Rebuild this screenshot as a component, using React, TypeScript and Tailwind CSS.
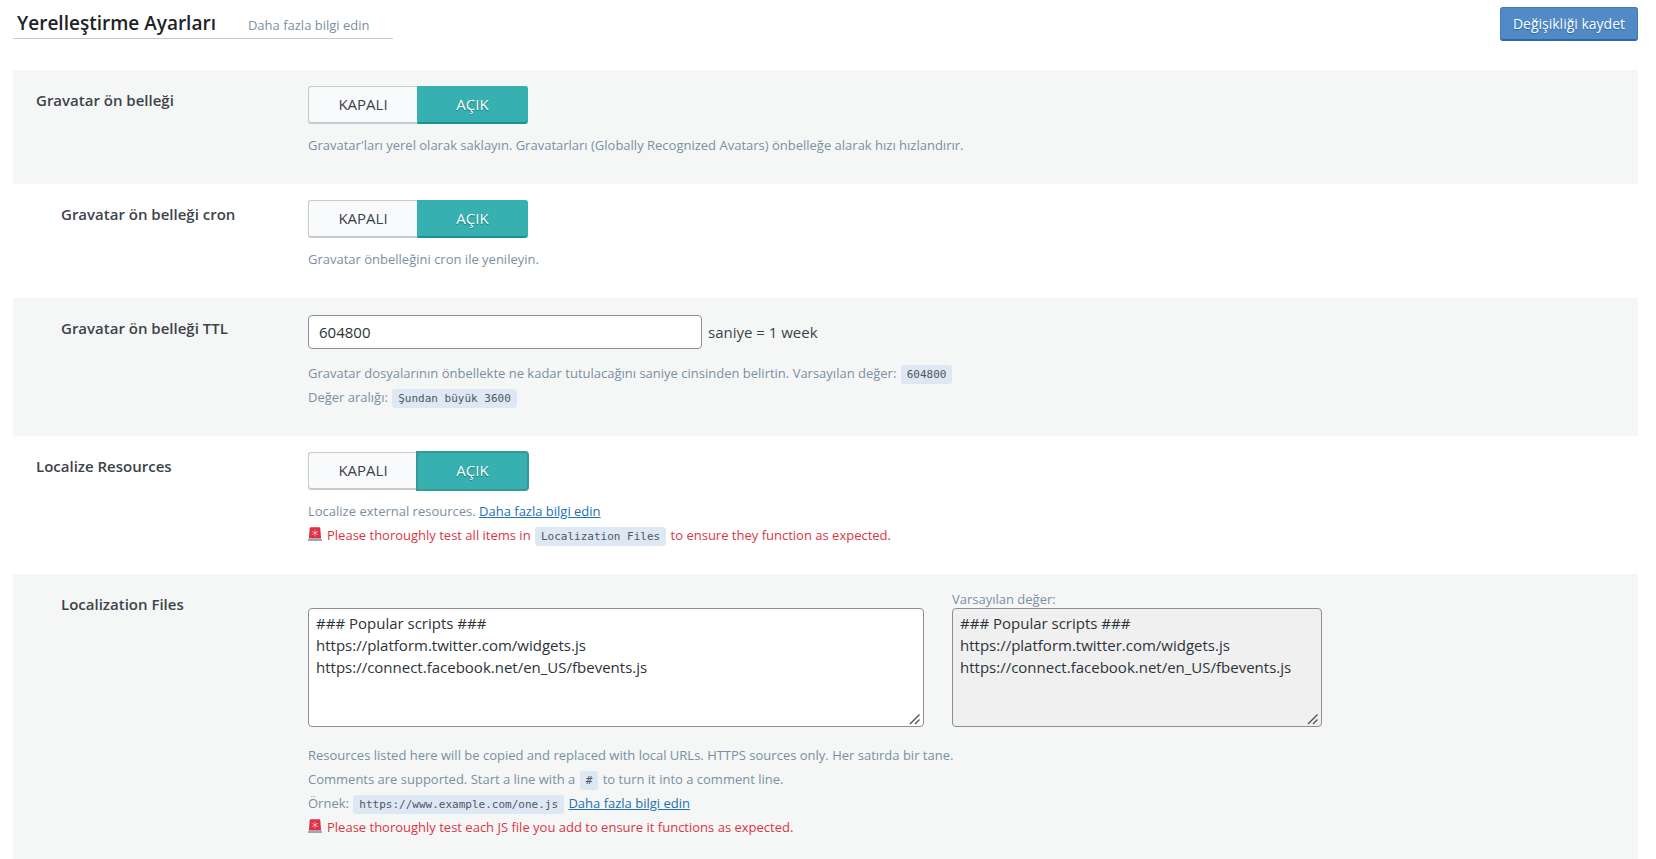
import { useState, type ReactNode } from "react";
import clsx from "clsx";

const scripts = `### Popular scripts ###
https://platform.twitter.com/widgets.js
https://connect.facebook.net/en_US/fbevents.js`;

function Row({
  title,
  htmlFor,
  sub,
  shaded,
  last,
  children,
}: {
  title: string;
  htmlFor?: string;
  sub?: boolean;
  shaded?: boolean;
  last?: boolean;
  children: ReactNode;
}) {
  const cls = clsx(
    "w-[272px] shrink-0 pt-[2px] text-[15px] leading-6 font-semibold text-[#3c434a]",
    sub && "pl-[25px]",
  );
  return (
    <div
      className={clsx(
        "flex pt-4 pl-[23px]",
        shaded && "bg-[#f5f7f7]",
        last ? "pb-5" : "pb-[27px]",
      )}
    >
      {htmlFor ? (
        <label htmlFor={htmlFor} className={cls}>
          {title}
        </label>
      ) : (
        <div className={cls}>{title}</div>
      )}
      <div className="min-w-0 flex-1">{children}</div>
    </div>
  );
}

function Toggle({ name, focused }: { name: string; focused?: boolean }) {
  const [on, setOn] = useState(true);
  const base =
    "flex h-[38px] cursor-pointer items-center justify-center border pb-[2px] text-[15px]";
  return (
    <div role="radiogroup" aria-label={name} className="flex">
      <label
        className={clsx(
          base,
          "w-[109px] rounded-l-[3px]",
          on
            ? "border-[#c8cbcd] border-r-0 bg-[#f9fafc] text-[#3c434a] shadow-[inset_0_-1px_0_#c8cbcd]"
            : "border-[#36b0b0] bg-[#36b0b0] text-white",
        )}
      >
        <input
          type="radio"
          name={name}
          checked={!on}
          onChange={() => setOn(false)}
          className="sr-only"
        />
        KAPALI
      </label>
      <label
        className={clsx(
          base,
          "w-[111px] rounded-r-[3px]",
          on
            ? "border-[#36b0b0] bg-[#36b0b0] text-white text-shadow-[0_1px_1px_#1b7272]"
            : "border-[#c8cbcd] bg-[#f9fafc] text-[#3c434a]",
          on && !focused && "border-b-[#1b9292] shadow-[inset_0_-1px_0_#1b9292]",
          focused && "outline-2 -outline-offset-1 outline-[#369a94]",
        )}
      >
        <input
          type="radio"
          name={name}
          checked={on}
          onChange={() => setOn(true)}
          className="sr-only"
        />
        AÇIK
      </label>
    </div>
  );
}

function Code({ children }: { children: ReactNode }) {
  return (
    <code className="mx-px inline-block rounded-[3px] bg-[#dde8f4] px-[6px] align-middle font-['DejaVu_Sans_Mono',monospace] text-[11px] leading-[19px] text-[#50575e]">
      {children}
    </code>
  );
}

function MoreLink() {
  return (
    <a href="#docs" className="text-[#2271b1] underline">
      Daha fazla bilgi edin
    </a>
  );
}

function Siren() {
  return (
    <svg viewBox="0 0 14 14" className="mr-[5px] inline-block size-[14px] align-[-1px]" aria-hidden="true">
      <path d="M.9 11.4 1.7 1.5Q1.9.3 3 .3h8q1.1 0 1.3 1.2l.8 9.9z" fill="#dd2e44" />
      <path
        d="M7 2.8v6.4M4 4.3l6 3.4M10 4.3 4 7.7"
        stroke="#f4a0ac"
        strokeWidth=".9"
        strokeLinecap="round"
      />
      <circle cx="7" cy="6" r="1" fill="#f9c8cf" />
      <path d="M0 11.8h14V14H0z" fill="#99aab5" />
    </svg>
  );
}

function Desc({ children, className }: { children: ReactNode; className?: string }) {
  return (
    <div className={clsx("text-[13px] leading-6 text-[#7b8f9f]", className ?? "mt-[9px]")}>
      {children}
    </div>
  );
}

function ScriptArea({ id, readOnly }: { id: string; readOnly?: boolean }) {
  return (
    <div className="relative">
      <textarea
        id={id}
        readOnly={readOnly}
        defaultValue={scripts}
        className={clsx(
          "block h-[119px] w-full resize-y rounded-[4px] border border-[#8c8f94] px-[7px] py-[3px] text-[15px] leading-[22px] text-[#2c3338] [&::-webkit-resizer]:bg-transparent",
          readOnly ? "bg-[#f0f0f0]" : "bg-white",
        )}
      />
      {/* resize grip */}
      <svg
        viewBox="0 0 12 12"
        className="pointer-events-none absolute right-[3px] bottom-[2px] size-3"
        aria-hidden="true"
      >
        <path d="M1 11 10.5 1.5M6 11l4.5-4.5" stroke="#50505a" strokeWidth="1.4" />
      </svg>
    </div>
  );
}

export default function App() {
  return (
    <div className="bg-white pr-[18px] pl-[13px] font-['Open_Sans','Noto_Sans',sans-serif] text-[#3c434a]">
      <header className="flex items-start justify-between pt-[7px] pb-[29px]">
        <div className="flex h-8 w-[380px] items-baseline gap-8 border-b border-[#c8cbcd] pl-1">
          <h1 className="text-[19px] leading-8 font-semibold text-[#1d2327]">
            Yerelleştirme Ayarları
          </h1>
          <a href="#docs" className="text-[13px] text-[#7b8f9f]">
            Daha fazla bilgi edin
          </a>
        </div>
        <button
          type="button"
          className="h-[34px] rounded-[3px] border border-[#3f7cba] border-b-[#2768b1] bg-[#528ac5] px-3 pb-[2px] text-[14px] text-white shadow-[inset_0_-1px_0_#2768b1] text-shadow-[0_1px_1px_#2768b1]"
        >
          Değişikliği kaydet
        </button>
      </header>

      <main>
        <Row title="Gravatar ön belleği" shaded>
          <Toggle name="Gravatar ön belleği" />
          <Desc>
            Gravatar'ları yerel olarak saklayın. Gravatarları (Globally Recognized Avatars)
            önbelleğe alarak hızı hızlandırır.
          </Desc>
        </Row>

        <Row title="Gravatar ön belleği cron" sub>
          <Toggle name="Gravatar ön belleği cron" />
          <Desc>Gravatar önbelleğini cron ile yenileyin.</Desc>
        </Row>

        <Row title="Gravatar ön belleği TTL" htmlFor="ttl" sub shaded>
          <div className="flex h-[38px] items-center gap-[6px] pb-[2px] text-[15px]">
            <input
              id="ttl"
              type="text"
              defaultValue="604800"
              className="h-[34px] w-[394px] rounded-[4px] border border-[#8c8f94] bg-white px-[10px] text-[#2c3338]"
            />
            saniye = 1 week
          </div>
          <Desc>
            Gravatar dosyalarının önbellekte ne kadar tutulacağını saniye cinsinden belirtin.
            Varsayılan değer: <Code>604800</Code>
            <br />
            Değer aralığı: <Code>Şundan büyük 3600</Code>
          </Desc>
        </Row>

        <Row title="Localize Resources">
          <Toggle name="Localize Resources" focused />
          <Desc>
            Localize external resources. <MoreLink />
            <div className="text-[#dc3545]">
              <Siren />
              Please thoroughly test all items in <Code>Localization Files</Code> to ensure they
              function as expected.
            </div>
          </Desc>
        </Row>

        <Row title="Localization Files" htmlFor="files" sub shaded last>
          <div className="flex items-end gap-7">
            <div className="w-[616px]">
              <ScriptArea id="files" />
            </div>
            <div className="w-[370px]">
              <label htmlFor="defaults" className="block text-[13px] leading-[18px] text-[#7b8f9f]">
                Varsayılan değer:
              </label>
              <ScriptArea id="defaults" readOnly />
            </div>
          </div>
          <Desc className="mt-4">
            Resources listed here will be copied and replaced with local URLs. HTTPS sources only.
            Her satırda bir tane.
            <br />
            Comments are supported. Start a line with a <Code>#</Code> to turn it into a comment
            line.
            <br />
            Örnek: <Code>https://www.example.com/one.js</Code> <MoreLink />
            <div className="text-[#dc3545]">
              <Siren />
              Please thoroughly test each JS file you add to ensure it functions as expected.
            </div>
          </Desc>
        </Row>
      </main>
    </div>
  );
}
